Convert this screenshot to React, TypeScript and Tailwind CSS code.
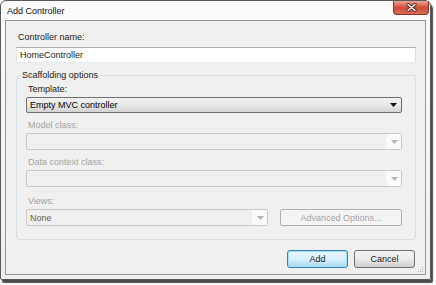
import React from 'react';

const font = { fontFamily: '"Liberation Sans", Arial, sans-serif' };

function Arrow({ disabled }: { disabled?: boolean }) {
  return (
    <svg width="7" height="4" viewBox="0 0 7 4" className="shrink-0">
      <path d="M0 0H7L3.5 4Z" fill={disabled ? '#b4b4b4' : '#111'} />
    </svg>
  );
}

function DisabledCombo({ width, text }: { width: string; text?: string }) {
  return (
    <div className={`${width} h-[17px] flex border border-[#c9c9c9] rounded-[2px] bg-[#f0f0f0]`}>
      <div className="flex-1 pl-[3px] flex items-center text-[#5e5e5e] border-r border-[#f8f8f8]">{text}</div>
      <div className="w-[14px] flex items-center justify-center bg-[#fafafa]">
        <Arrow disabled />
      </div>
    </div>
  );
}

export default function App() {
  return (
    <div className="w-[436px] h-[285px] bg-white text-[9px] leading-[12px] text-[#1a1a1a]" style={font}>
      <div className="w-[431px] h-[280px] flex flex-col border border-[#5a5a5a] rounded-t-[6px] rounded-b-[2px] bg-gradient-to-b from-[#fbfbfb] to-[#eeeeee] shadow-[2px_3px_1px_rgba(0,0,0,0.7)]">
        {/* Title bar */}
        <div className="h-[19px] flex items-start justify-between">
          <div className="pl-[6px] pt-[4px] text-[#111]">Add Controller</div>
          <div className="mr-[1px] w-[36px] h-[14px] flex items-center justify-center rounded-b-[4px] border border-t-0 border-[#8a3326] bg-gradient-to-b from-[#eaa496] via-[#cf4c38] to-[#d86b55]">
            <svg width="11" height="9" viewBox="0 0 11 9">
              <path d="M2 1.5L9 7.5M9 1.5L2 7.5" stroke="#5a1a12" strokeWidth="3.2" strokeLinecap="round" />
              <path d="M2 1.5L9 7.5M9 1.5L2 7.5" stroke="#fff" strokeWidth="1.6" strokeLinecap="round" />
            </svg>
          </div>
        </div>

        {/* Client area */}
        <div className="flex-1 ml-[4px] mr-[4px] mb-[4px] border border-[#979797] bg-[#f0f0f0] pl-[10px] pt-[10px] relative">
          <div className="pl-[2px]">Controller name:</div>
          <div className="mt-[4px] w-[400px] h-[16px] border border-[#abadb3] border-b-[#e3e9ef] border-r-[#dbdfe6] border-l-[#e2e3ea] bg-white pl-[3px] flex items-center">
            HomeController
          </div>

          <fieldset className="mt-[6px] w-[400px] border border-[#d5dfe5] rounded-[3px] pl-[9px] pt-[2px] pb-[13px]">
            <legend className="ml-[-5px] px-[1px]">Scaffolding options</legend>

            <div className="pl-[2px] mb-[2px]">Template:</div>
            <div className="w-[376px] h-[16px] flex items-center justify-between border border-[#707070] rounded-[2px] bg-gradient-to-b from-[#f2f2f2] via-[#e8e8e8] to-[#d4d4d4] pl-[3px] pr-[4px]">
              <span className="text-black">Empty MVC controller</span>
              <Arrow />
            </div>

            <div className="pl-[2px] mt-[6px] mb-[2px] text-[#a3a3a3]">Model class:</div>
            <DisabledCombo width="w-[376px]" />

            <div className="pl-[2px] mt-[6px] mb-[2px] text-[#a3a3a3]">Data context class:</div>
            <DisabledCombo width="w-[376px]" />

            <div className="pl-[2px] mt-[8px] mb-[2px] text-[#a3a3a3]">Views:</div>
            <div className="flex items-center gap-[12px]">
              <DisabledCombo width="w-[242px]" text="None" />
              <div className="w-[122px] h-[17px] flex items-center justify-center border border-[#adb2b5] rounded-[2px] bg-[#f4f4f4] text-[#a3a3a3]">
                Advanced Options...
              </div>
            </div>
          </fieldset>

          <div className="mt-[10px] w-[399px] flex justify-end gap-[6px]">
            <div className="w-[61px] h-[18px] flex items-center justify-center rounded-[3px] border border-[#3c7fb1] bg-gradient-to-b from-[#eaf6fd] via-[#d9f0fc] to-[#a7d9f5] shadow-[inset_0_0_0_1px_#9fe0fb]">
              Add
            </div>
            <div className="w-[61px] h-[18px] flex items-center justify-center rounded-[3px] border border-[#707070] bg-gradient-to-b from-[#f2f2f2] via-[#ebebeb] to-[#cfcfcf]">
              Cancel
            </div>
          </div>

          {/* resize grip */}
          <svg className="absolute right-[1px] bottom-[1px]" width="7" height="7" viewBox="0 0 7 7">
            <g fill="#b8b8b8">
              <rect x="5" y="1" width="1" height="1" />
              <rect x="3" y="3" width="1" height="1" />
              <rect x="5" y="3" width="1" height="1" />
              <rect x="1" y="5" width="1" height="1" />
              <rect x="3" y="5" width="1" height="1" />
              <rect x="5" y="5" width="1" height="1" />
            </g>
          </svg>
        </div>
      </div>
    </div>
  );
}
